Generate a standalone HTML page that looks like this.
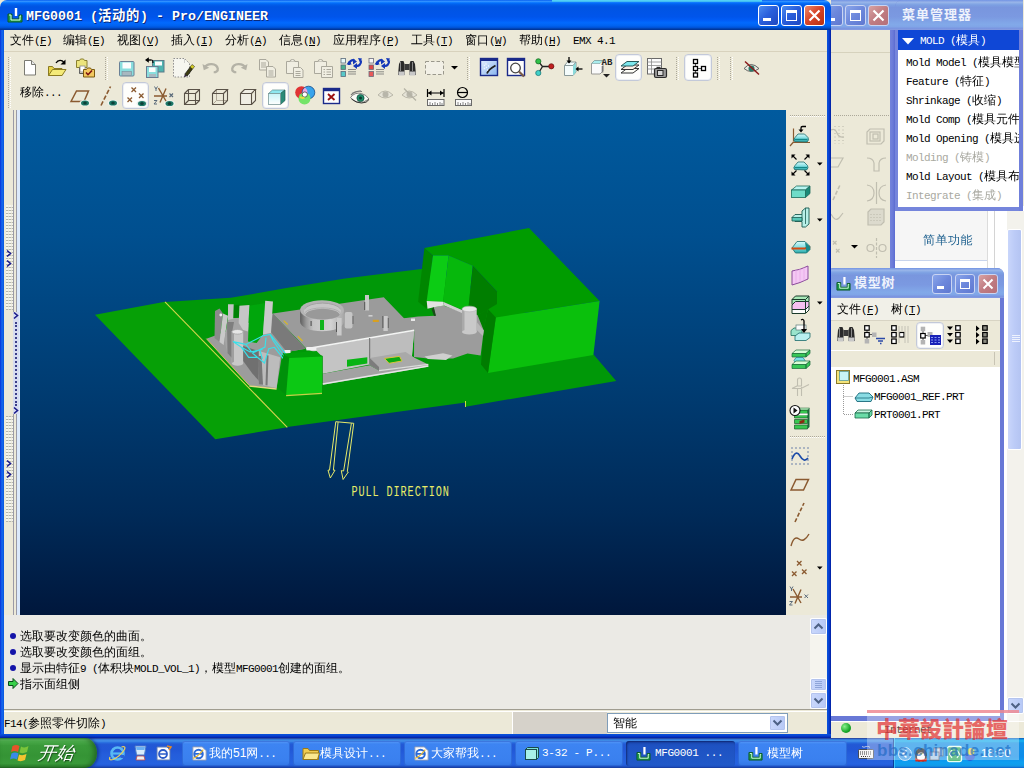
<!DOCTYPE html>
<html lang="zh-CN"><head><meta charset="utf-8"><title>MFG0001 - Pro/ENGINEER</title>
<style>
*{box-sizing:border-box;margin:0;padding:0}
html,body{width:1024px;height:768px;overflow:hidden}
body{position:relative;background:#ece9d8;color:#000;font-family:"Liberation Sans","WenQuanYi Zen Hei","Noto Sans CJK SC",sans-serif;font-size:12px;line-height:14px}
.a{position:absolute}
.mono{font-family:"Liberation Mono","WenQuanYi Zen Hei Mono","Noto Sans Mono CJK SC",monospace}
.ttl{font-family:"Liberation Sans","Noto Sans CJK SC",sans-serif;color:#fff;font-weight:bold;font-size:13px;white-space:nowrap;text-shadow:1px 1px 0 #0a2a7a}
.tb-act{background:linear-gradient(#0058ee 0%,#3593ff 4%,#288eff 6%,#127dff 8%,#036ffc 10%,#0262ee 14%,#0057e5 20%,#0054e3 24%,#0055eb 56%,#005bf5 66%,#026afe 76%,#0062ef 86%,#0052d6 92%,#0040ab 96%,#003092 100%)}
.tb-in{background:linear-gradient(#7697e7 0%,#7e9ee3 3%,#94afe8 6%,#97b4e9 8%,#82a5e4 14%,#7c9fe2 17%,#7996de 25%,#7b99e1 56%,#82a9e9 81%,#80a5e7 89%,#7b96e1 94%,#7a93df 97%,#8ea1e0 100%)}
.wb{width:21px;height:21px;border:1px solid #fff;border-radius:3px;background:linear-gradient(135deg,#4c8cf0 0%,#2a5fdc 45%,#1f48c0 100%)}
.wb.x{background:linear-gradient(135deg,#ea8a6c 0%,#d8452a 45%,#b8300f 100%)}
.wbi{width:21px;height:21px;border:1px solid #c9d4f3;border-radius:3px;background:linear-gradient(135deg,#8aa6ea 0%,#6d88dc 50%,#5f78d0 100%)}
.wbi.x{background:linear-gradient(135deg,#d9a3a3 0%,#c07c82 50%,#b56f78 100%)}
.menu span{position:absolute;top:0;white-space:nowrap}
i.l{font-style:normal;font-family:"Liberation Mono",monospace;font-size:11px;letter-spacing:-.6px}
.msg{white-space:nowrap;font-size:12px;line-height:14px}
.tk{position:absolute;top:741px;height:25px;border-radius:3px;background:linear-gradient(#5a9bf8 0%,#3d84f2 12%,#3a80ef 80%,#3276e4 100%);box-shadow:inset 0 0 0 1px rgba(30,80,190,.45);color:#fff;font-size:12px;line-height:25px;white-space:nowrap;overflow:hidden}
.tk b{font-weight:normal;position:absolute;left:27px;top:0}
.tk.on{background:linear-gradient(#1a49b4 0%,#1e52c2 20%,#2159c9 100%);box-shadow:inset 1px 1px 2px rgba(0,0,40,.5)}
.grip{position:absolute;width:3px;border-left:1px dotted #aca899;border-right:1px dotted #fff}
.sb{position:absolute;width:17px;height:17px;border:1px solid #fff;border-radius:2px;background:linear-gradient(90deg,#cad8fc,#b6c8f6);box-shadow:0 0 0 1px #b4c4ee inset}
</style></head><body>

<!-- ============ BACKGROUND (inactive) WINDOW ============ -->
<div id="bgwin" class="a" style="left:760px;top:0;width:264px;height:740px;background:#ece9d8">
 <div class="a tb-in" style="left:0;top:0;width:150px;height:30px"></div>
 <div class="a wbi" style="left:62px;top:5px"><div class="a" style="left:4px;top:12px;width:8px;height:3px;background:#fff"></div></div>
 <div class="a wbi" style="left:85px;top:5px"><div class="a" style="left:4px;top:4px;width:11px;height:11px;border:1px solid #fff;border-top-width:3px"></div></div>
 <div class="a wbi x" style="left:108px;top:5px"><svg class="a" style="left:3px;top:3px" width="13" height="13" viewBox="0 0 13 13"><path d="M1.500 1.500l10 10M11.500 1.500l-10 10" stroke="#fff" stroke-width="2.200"/></svg></div>
 <div class="a" style="left:71px;top:52px;width:60px;height:1px;background:#d6d2bd"></div>
 <div class="a" style="left:74px;top:115px;width:55px;height:0;border-top:1px dotted #aca899"></div>
 <div class="a" style="left:130px;top:30px;width:5px;height:710px;background:linear-gradient(90deg,#7484dc,#6a7ad8 60%,#5c6cd0)"></div>
 <!-- grey sketch icons -->
 <svg class="a" style="left:71px;top:120px" width="59" height="150" viewBox="831 120 59 150" fill="none" stroke="#c0beb0" stroke-width="1.200">
  <path d="M831 130q4-2 6 3t7 4"/><g stroke-dasharray="1 2.500"><path d="M835 126v18M839 126v18M843 126v18"/></g>
  <path d="M831 167h7l5-9h-12"/>
  <path d="M833 200l7-15" stroke-dasharray="4 2" stroke-width="1.600"/>
  <path d="M831 214q4 8 8 4l4-5"/>
  <path d="M833 241l3.500 3.500M836.500 241l-3.500 3.500M836 249l3.500 3.500M839.500 249l-3.500 3.500"/>
  <path d="M867 132l3-3h14v12l-3 3h-14z"/><rect x="870" y="132" width="10" height="9"/><rect x="873" y="134" width="5" height="5"/>
  <path d="M867 158q6 0 7 5v8h5v-8q1-5 7-5"/>
  <path d="M867 185q7 1 7 8t-7 8M886 185q-7 1-7 8t7 8M876.500 182v22"/>
  <path d="M868 212l3-3h13v13l-3 3h-13z" fill="#dcdacd"/><g stroke-dasharray="1 2"><path d="M871 214v9M874 214v9M877 214v9M880 214v9"/></g>
  <circle cx="870.500" cy="248" r="3.500"/><circle cx="882.500" cy="248" r="3.500"/><path d="M876.500 238v20" stroke-dasharray="3 1.500"/>
 </svg>
 <svg class="a" style="left:91px;top:245px" width="7" height="4" viewBox="0 0 7 4"><path d="M0 0h7l-3.500 3.500z" fill="#000"/></svg>
 <!-- web page area under menu manager -->
 <div class="a" style="left:135px;top:206px;width:129px;height:534px;background:#fff"></div>
 <div class="a" style="left:135px;top:211px;width:92px;height:50px;background:#f6f6f6;border-bottom:1px solid #c8d4ec"></div>
 <div class="a" style="left:227px;top:211px;width:1px;height:60px;background:#dcdcdc"></div>
 <div class="a" style="left:234px;top:211px;width:1px;height:60px;background:#d4d4d4"></div>
 <div class="a" style="left:135px;top:233px;width:92px;text-align:center;color:#1c5f8e;font-size:12px;letter-spacing:.5px;padding-left:14px">简单功能</div>
 <!-- page scrollbar -->
 <div class="a" style="left:247px;top:211px;width:17px;height:527px;background:#f3f2ec"></div>
 <div class="a" style="left:247px;top:229px;width:15px;height:221px;background:linear-gradient(90deg,#c9d6fb,#bccbf7 50%,#b4c4f2);border:1px solid #fff;border-radius:2px"></div>
 <svg class="a" style="left:252px;top:334px" width="9" height="12" viewBox="0 0 9 12"><path d="M0 1.500h8M0 3.500h8M0 5.500h8M0 7.500h8" stroke="#eef2fe" stroke-width="1"/></svg>
 <div class="sb" style="left:247px;top:697px;width:17px;height:17px"><svg width="15" height="15" viewBox="0 0 15 15"><path d="M3.500 5.500l4 4 4-4" fill="none" stroke="#4d6185" stroke-width="2"/></svg></div>
 <!-- IE status bar -->
 <div class="a" style="left:71px;top:721px;width:193px;height:17px;background:#ece9d8;border-top:1px solid #fff"></div>
 <div class="a" style="left:81px;top:723px;width:10px;height:10px;border-radius:5px;background:radial-gradient(circle at 35% 35%,#8af08a,#18a828 60%,#0a7a18)"></div>
 <div class="a" style="left:124px;top:722px"><i class="l">Internet</i></div>
</div>

<!-- ============ MENU MANAGER ============ -->
<div id="menumgr" class="a" style="left:895px;top:0;width:128px;height:211px;background:#7585dc;border-radius:7px 0 0 0;overflow:hidden">
 <div class="a tb-in" style="left:0;top:0;width:129px;height:30px"></div>
 <div class="a ttl" style="left:7px;top:8px;font-size:13px;letter-spacing:1px;text-shadow:none;color:#eef2fc">菜单管理器</div>
 <div class="a" style="left:3px;top:30px;width:121px;height:177px;background:#fff"></div>
 <div class="a" style="left:3px;top:30px;width:121px;height:20px;background:#0f47d6"></div>
 <svg class="a" style="left:7px;top:38px" width="12" height="7" viewBox="0 0 12 7"><path d="M0 0h12l-6 6.500z" fill="#fff"/></svg>
 <div class="a mm" style="left:25px;top:33px;color:#fff"><i>MOLD (</i>模具<i>)</i></div>
 <style>.mm{white-space:nowrap;font-size:12px;line-height:14px}.mm i{font-style:normal;font-family:"Liberation Mono",monospace;font-size:11px;letter-spacing:-.6px}</style>
 <div class="a mm" style="left:11px;top:55px"><i>Mold Model (</i>模具模型<i>)</i></div>
 <div class="a mm" style="left:11px;top:74px"><i>Feature (</i>特征<i>)</i></div>
 <div class="a mm" style="left:11px;top:93px"><i>Shrinkage (</i>收缩<i>)</i></div>
 <div class="a mm" style="left:11px;top:112px"><i>Mold Comp (</i>模具元件<i>)</i></div>
 <div class="a mm" style="left:11px;top:131px"><i>Mold Opening (</i>模具进料孔<i>)</i></div>
 <div class="a mm" style="left:11px;top:150px;color:#a9a9a1"><i>Molding (</i>铸模<i>)</i></div>
 <div class="a mm" style="left:11px;top:169px"><i>Mold Layout (</i>模具布局<i>)</i></div>
 <div class="a mm" style="left:11px;top:188px;color:#a9a9a1"><i>Integrate (</i>集成<i>)</i></div>
 <div class="a" style="left:124px;top:30px;width:4px;height:182px;background:#6f7fda"></div>
</div>

<!-- ============ MODEL TREE ============ -->
<div id="mtree" class="a" style="left:827px;top:268px;width:177px;height:453px;background:#6878d6;border-radius:7px 7px 0 0;overflow:hidden">
 <div class="a tb-in" style="left:0;top:0;width:177px;height:30px"></div>
 <svg class="a" style="left:9px;top:8px" width="15" height="15" viewBox="0 0 16 16"><path d="M1 7h4v5h7V8h3v7H1z" fill="#1e9a4a" stroke="#0b5a26" stroke-width="1"/><path d="M9 1v8" stroke="#fff" stroke-width="2.400"/><path d="M2 8h2v5h9V9h1" fill="none" stroke="#d8ffe0" stroke-width="1"/></svg>
 <div class="a ttl" style="left:27px;top:8px;font-size:13px;letter-spacing:.8px;text-shadow:none;color:#eef2fc">模型树</div>
 <div class="a wbi" style="left:105px;top:6px;width:20px;height:20px"><div class="a" style="left:4px;top:11px;width:7px;height:3px;background:#fff"></div></div>
 <div class="a wbi" style="left:128px;top:6px;width:20px;height:20px"><div class="a" style="left:4px;top:4px;width:10px;height:10px;border:1px solid #fff;border-top-width:3px"></div></div>
 <div class="a wbi x" style="left:151px;top:6px;width:20px;height:20px"><svg class="a" style="left:3px;top:3px" width="12" height="12" viewBox="0 0 12 12"><path d="M1.500 1.500l9 9M10.500 1.500l-9 9" stroke="#fff" stroke-width="2"/></svg></div>
 <div class="a" style="left:4px;top:30px;width:169px;height:418px;background:#ece9d8"></div>
 <div class="a" style="left:4px;top:30px;width:169px;height:23px;background:#f1f0e8;border-bottom:1px solid #d8d4c4"></div>
 <div class="a" style="left:10px;top:34px;white-space:nowrap">文件<i class="l">(<u>F</u>)</i></div>
 <div class="a" style="left:64px;top:34px;white-space:nowrap">树<i class="l">(<u>T</u>)</i></div>
 <!-- toolbar -->
 <svg class="a" style="left:9px;top:58px" width="20" height="17" viewBox="0 0 20 17"><path d="M2 4l1.500-3h3l1 3v11h-6.500zM18 4l-1.500-3h-3l-1 3v11h6.500z" fill="#2a2a2a"/><rect x="7.500" y="4" width="5" height="6" fill="#3a3a3a"/><rect x="1.500" y="11.500" width="6" height="4" fill="#c8c8c8"/><rect x="12.500" y="11.500" width="6" height="4" fill="#c8c8c8"/><path d="M3.500 2v9M15.500 2v9" stroke="#8a8a8a"/></svg>
 <svg class="a" style="left:36px;top:56px" width="24" height="22" viewBox="0 0 24 22"><path d="M4 4v12M4 10.500h6" stroke="#555"/><g fill="#fff" stroke="#000" stroke-width="1.200"><rect x="1.700" y="1.700" width="4.500" height="4.500"/></g><rect x="1.700" y="8.500" width="4.500" height="4.500" fill="#fff" stroke="#000" stroke-width="1.200"/><rect x="9" y="8.500" width="4.500" height="4.500" fill="#b4b4b4"/><rect x="1.700" y="15" width="4.500" height="4.500" fill="#b4b4b4"/><path d="M13 14.500h9M15 17h5M17 19.500h1.500" stroke="#2a4aa8" stroke-width="1.300"/></svg>
 <svg class="a" style="left:63px;top:56px" width="20" height="22" viewBox="0 0 20 22"><g fill="#fff" stroke="#000" stroke-width="1.200"><rect x="1.700" y="1.700" width="4.500" height="4.500"/><rect x="1.700" y="8.500" width="4.500" height="4.500"/><rect x="1.700" y="15" width="4.500" height="4.500"/><rect x="9.500" y="8.500" width="4.500" height="4.500"/></g><path d="M9 2v17M12 2v5M15 2v17M18 2v17" stroke="#c4c2b6"/></svg>
 <div class="pb" style="left:89px;top:54px;width:28px"></div>
 <svg class="a" style="left:92px;top:57px" width="24" height="22" viewBox="0 0 24 22"><path d="M4 4v12M4 10.500h6" stroke="#555"/><rect x="1.700" y="1.700" width="4.500" height="4.500" fill="#b4b4b4"/><rect x="1.700" y="8.500" width="4.500" height="4.500" fill="#fff" stroke="#000" stroke-width="1.200"/><rect x="1.700" y="15" width="4.500" height="4.500" fill="#b4b4b4"/><rect x="8.500" y="7" width="5" height="5" fill="#b4b4b4"/><rect x="11" y="10" width="11" height="10" fill="#1a22b8"/><path d="M12 12.500h9M12 15h9M12 17.500h9" stroke="#8a9af0" stroke-dasharray="2 1.500"/></svg>
 <svg class="a" style="left:119px;top:56px" width="18" height="22" viewBox="0 0 18 22"><g fill="#000"><path d="M1 2.500h6l-3 3.500zM1 9h6l-3 3.500zM1 15.500h6l-3 3.500z"/></g><g fill="#fff" stroke="#000" stroke-width="1.200"><rect x="9.700" y="1.700" width="4.500" height="4.500"/><rect x="9.700" y="8.500" width="4.500" height="4.500"/><rect x="9.700" y="15" width="4.500" height="4.500"/></g></svg>
 <svg class="a" style="left:147px;top:56px" width="18" height="22" viewBox="0 0 18 22"><g fill="#000"><path d="M2 1.500v6l3.500-3zM2 8v6l3.500-3zM2 14.500v6l3.500-3z"/></g><g fill="#8a8a80" stroke="#000" stroke-width="1.200"><rect x="8.700" y="1.700" width="4.500" height="4.500"/><rect x="8.700" y="8.500" width="4.500" height="4.500"/><rect x="8.700" y="15" width="4.500" height="4.500"/></g></svg>
 <!-- column header -->
 <div class="a" style="left:4px;top:82px;width:169px;height:17px;background:#ece9d8;border-top:1px solid #fff"></div>
 <div class="a" style="left:167px;top:84px;width:1px;height:13px;background:#c8c4b4"></div>
 <!-- tree -->
 <div class="a" style="left:4px;top:99px;width:169px;height:349px;background:#fff"></div>
 <svg class="a" style="left:8px;top:101px" width="40" height="56" viewBox="0 0 40 56"><path d="M8.500 16v29.500h10M8.500 27.500h10" stroke="#9a9a9a" stroke-dasharray="1 1" fill="none"/><rect x="1.500" y="1.500" width="13" height="13" fill="#f4e47a" stroke="#8a7a2a"/><rect x="4.500" y="2.500" width="9" height="9" fill="#c8f4f4" stroke="#5a9a9a" stroke-width=".8"/><path d="M20 29l4-5h10l4 4-2 4.500h-14z" fill="#8adce4" stroke="#1a6a7a" stroke-width=".9"/><path d="M20 29h14l4-1" fill="none" stroke="#1a6a7a" stroke-width=".8"/><path d="M20 44l3-3h14l-3 3z" fill="#c8f4e0" stroke="#1a6a4a" stroke-width=".8"/><path d="M20 44h14v5h-14zM34 44l3-3v5l-3 3z" fill="#6adca8" stroke="#1a6a4a" stroke-width=".8"/></svg>
 <div class="a mm" style="left:26px;top:103px"><i>MFG0001.ASM</i></div>
 <div class="a mm" style="left:47px;top:121px"><i>MFG0001_REF.PRT</i></div>
 <div class="a mm" style="left:47px;top:139px"><i>PRT0001.PRT</i></div>
</div>

<!-- ============ MAIN WINDOW ============ -->
<div id="main" class="a" style="left:0;top:0;width:831px;height:738px;background:#ece9d8">
 <!-- title bar -->
 <div class="a tb-act" style="left:0;top:0;width:831px;height:30px;border-radius:7px 7px 0 0"></div>
 <div class="a" style="left:0;top:30px;width:4px;height:708px;background:linear-gradient(90deg,#0831d9,#166aee 50%,#0855dd)"></div>
 <div class="a" style="left:827px;top:30px;width:4px;height:708px;background:linear-gradient(90deg,#0855dd,#0a3fd0 50%,#001ea0)"></div>
 <div class="a" style="left:0;top:734px;width:831px;height:4px;background:linear-gradient(#0855dd,#0a3fd0 50%,#001ea0)"></div>
 <svg class="a" style="left:7px;top:7px" width="16" height="16" viewBox="0 0 16 16"><path d="M1 7h4v5h7V8h3v7H1z" fill="#1e9a4a" stroke="#0b5a26" stroke-width="1"/><path d="M9 1v8" stroke="#fff" stroke-width="2.4"/><path d="M2 8h2v5h9V9h1" fill="none" stroke="#d8ffe0" stroke-width="1"/></svg>
 <div id="t-main" class="a ttl" style="left:26px;top:9px;font-family:'Liberation Mono','Noto Sans CJK SC',monospace;font-size:13.33px;line-height:15px">MFG0001 (<span style="letter-spacing:.67px">活动的</span>) - Pro/ENGINEER</div>
 <div class="a wb" style="left:758px;top:5px"><div class="a" style="left:4px;top:12px;width:8px;height:3px;background:#fff"></div></div>
 <div class="a wb" style="left:781px;top:5px"><div class="a" style="left:4px;top:4px;width:11px;height:11px;border:1px solid #fff;border-top-width:3px"></div></div>
 <div class="a wb x" style="left:804px;top:5px"><svg class="a" style="left:3px;top:3px" width="13" height="13" viewBox="0 0 13 13"><path d="M1.5 1.5l10 10M11.5 1.5l-10 10" stroke="#fff" stroke-width="2.2"/></svg></div>
 <div class="a" style="left:552px;top:0;width:210px;height:2px;background:linear-gradient(#5ad8f8,#38b4f0)"></div>
 <!-- menu bar -->
 <div class="a menu" style="left:4px;top:30px;width:823px;height:22px;background:#ece9d8;border-bottom:1px solid #d8d2bd">
  <span style="left:6px;top:3px">文件<i class="l">(<u>F</u>)</i></span><span style="left:59px;top:3px">编辑<i class="l">(<u>E</u>)</i></span><span style="left:113px;top:3px">视图<i class="l">(<u>V</u>)</i></span><span style="left:167px;top:3px">插入<i class="l">(<u>I</u>)</i></span><span style="left:221px;top:3px">分析<i class="l">(<u>A</u>)</i></span><span style="left:275px;top:3px">信息<i class="l">(<u>N</u>)</i></span><span style="left:329px;top:3px">应用程序<i class="l">(<u>P</u>)</i></span><span style="left:407px;top:3px">工具<i class="l">(<u>T</u>)</i></span><span style="left:461px;top:3px">窗口<i class="l">(<u>W</u>)</i></span><span style="left:515px;top:3px">帮助<i class="l">(<u>H</u>)</i></span><span style="left:569px;top:3px"><i class="l">EMX 4.1</i></span>
 </div>
 <!-- toolbars -->
<div id="tb" class="a" style="left:0;top:0;width:831px;height:110px">
<style>
.pb{position:absolute;width:27px;height:27px;background:#fefefc;border:1px solid #c3c9d9;border-radius:4px;box-shadow:inset 0 0 0 1px #eef0f4}
.ic{position:absolute;overflow:visible}
</style>
<div class="grip" style="left:8px;top:57px;height:51px"></div>
<div class="grip" style="left:105px;top:57px;height:23px"></div>
<div class="grip" style="left:467px;top:57px;height:23px"></div>
<div class="grip" style="left:676px;top:57px;height:23px"></div>
<div class="grip" style="left:717px;top:57px;height:23px"></div>
<div class="grip" style="left:730px;top:57px;height:23px"></div>
<!-- row1 -->
<svg class="ic" style="left:23px;top:58px" width="16" height="20" viewBox="0 0 16 20"><path d="M1.5 2.5h7l4 4v10.5h-11z" fill="#fff" stroke="#7a7a72"/><path d="M8.5 2.5v4h4" fill="#e8e8e8" stroke="#7a7a72"/></svg>
<svg class="ic" style="left:47px;top:57px" width="22" height="22" viewBox="0 0 22 22"><path d="M1.5 18.5v-9h4l1.5 2h8v7z" fill="#e8d44a" stroke="#8a7a20"/><path d="M1.5 18.5l4-6h13.5l-4 6z" fill="#f4ea78" stroke="#8a7a20"/><path d="M9 6c2-3.5 6-3.5 8-0.5" fill="none" stroke="#000" stroke-width="1.3"/><path d="M18.5 2.5v5h-5z" fill="#000"/></svg>
<svg class="ic" style="left:75px;top:57px" width="22" height="22" viewBox="0 0 22 22"><path d="M1.5 3.5h3l1-1.5h3l1 1.5h2.5v7h-10.5z" fill="#ece47c" stroke="#8a8030"/><path d="M4.500 10.500v6h4" fill="none" stroke="#555"/><rect x="5" y="9" width="5" height="6" fill="#fff" stroke="#888" stroke-width=".8"/><path d="M8.5 12.500h3l1-1.500h3l1 1.500h3v7.500h-11z" fill="#f2c860" stroke="#7a5a10"/><path d="M11 15.500l2 2.200 4-4.200" fill="none" stroke="#7a1010" stroke-width="1.6"/></svg>
<svg class="ic" style="left:118px;top:60px" width="18" height="18" viewBox="0 0 18 18"><rect x="1.500" y="1.500" width="14.500" height="14.500" rx="1" fill="#8adede" stroke="#6a8096"/><rect x="4.500" y="2.500" width="8.500" height="6" fill="#fdfdfd"/><rect x="4" y="11.500" width="9.500" height="4" fill="#a8b8c0" stroke="#7a8a98" stroke-width=".6"/></svg>
<svg class="ic" style="left:144px;top:57px" width="22" height="22" viewBox="0 0 22 22"><rect x="8.500" y="3.500" width="11.500" height="11.500" fill="#4eb4b0" stroke="#5a7a88"/><rect x="11" y="4.500" width="7" height="4" fill="#fdfdfd"/><rect x="2.500" y="9.500" width="11.500" height="11" fill="#8adede" stroke="#6a7a90"/><rect x="5" y="10.500" width="6.500" height="4.500" fill="#fdfdfd"/><rect x="5" y="17" width="7" height="3" fill="#a8b8c0"/><path d="M7.500 3h-4.500" stroke="#000" stroke-width="1.400"/><path d="M1 3l3.800-2.800v5.600z" fill="#000"/><path d="M7.500 3q1.500 0 1.500 3" fill="none" stroke="#000" stroke-width="1.200"/></svg>
<svg class="ic" style="left:172px;top:57px" width="24" height="22" viewBox="0 0 24 22"><path d="M1.500 1.500h11l5 5v13.500h-16z" fill="#f6f6f0" stroke="#8e8e8e" stroke-dasharray="1.500 1.500"/><path d="M12.500 5.500v-4" stroke="#aaa" stroke-dasharray="1 1"/><path d="M12.800 17.200l7.200-9.500 2.400 1.800-7.200 9.500z" fill="#3c3c10" stroke="#111" stroke-width=".7"/><path d="M18.300 9.900l1.700-2.200 2.400 1.800-1.700 2.200z" fill="#d4cc28"/><path d="M12.800 17.200l-.8 3 3.200-1.200z" fill="#30203a"/></svg>
<svg class="ic" style="left:202px;top:62px" width="18" height="11.500" viewBox="0 0 20 14" preserveAspectRatio="none"><path d="M3 6.500c3-5.500 13-5.500 14.500 1.500c.5 3-2 4.500-4.500 4.500" fill="none" stroke="#b4b2a6" stroke-width="2.600"/><path d="M.5 2.500l1.500 7.500 6-3z" fill="#b4b2a6"/></svg>
<svg class="ic" style="left:230px;top:62px" width="18" height="11.500" viewBox="0 0 20 14" preserveAspectRatio="none"><path d="M17 6.500c-3-5.500-13-5.500-14.500 1.500c-.5 3 2 4.500 4.500 4.500" fill="none" stroke="#b4b2a6" stroke-width="2.600"/><path d="M19.500 2.500l-1.500 7.500-6-3z" fill="#b4b2a6"/></svg>
<svg class="ic" style="left:258px;top:58px" width="20" height="20" viewBox="0 0 20 20"><g fill="#f0eee2" stroke="#aaa89c"><path d="M1.500 1.500h6.500l2.500 2.500v8h-9z"/><path d="M8.500 8.500h6.500l2.500 2.500v8h-9z"/></g><path d="M3 5h5M3 7h5M3 9h5M10.500 13h5M10.500 15h5M10.500 17h5" stroke="#aaa89c"/></svg>
<svg class="ic" style="left:285px;top:58px" width="20" height="21" viewBox="0 0 20 21"><g fill="#f0eee2" stroke="#aaa89c"><path d="M1.500 3.500h12v12h-12z"/><path d="M5 3.500q0-2 2.500-2t2.500 2"/><path d="M8.500 9.500h7l2.500 2.500v7.500h-9.500z"/></g><path d="M10.500 13.500h5M10.500 15.500h5M10.500 17.500h5" stroke="#aaa89c"/></svg>
<svg class="ic" style="left:313px;top:58px" width="22" height="21" viewBox="0 0 22 21"><g fill="#f0eee2" stroke="#aaa89c"><path d="M1.500 3.500h12v12h-12z"/><path d="M5 3.500q0-2 2.500-2t2.500 2"/><path d="M8.500 8.500h11v11h-11z"/></g><path d="M10.500 11.500h1.500M13.500 11.500h4.500M10.500 14h1.500M13.500 14h4.500M10.500 16.500h1.500M13.500 16.500h4.500" stroke="#aaa89c"/></svg>
<svg class="ic" style="left:340px;top:57px" width="23" height="22" viewBox="0 0 23 22"><g stroke="#5a6a7a" stroke-width=".8"><rect x="1" y="1.500" width="4.500" height="4.500" fill="#e8f8f8"/><rect x="1" y="8" width="4.500" height="4.500" fill="#48b090"/><rect x="1" y="14.500" width="4.500" height="5" fill="#58c8c8"/></g><path d="M8 12.500h8M8 14.800h8M8 17h8" stroke="#8a8a86"/><path d="M9 8c0-4 3-5.500 5.500-4.500M21 3.500c.5 4-2.500 6-5 5" fill="none" stroke="#1438b8" stroke-width="2.200"/><path d="M6.500 7.500l2.700-4 2.500 4zM18 1l4 .5-2 4z" fill="#1438b8"/><path d="M13 1.500l4 3-4 3z" fill="#1438b8"/><path d="M17 10.500l-4-3 4-3z" fill="#1438b8" transform="translate(0,1.500)"/></svg>
<svg class="ic" style="left:368px;top:57px" width="23" height="22" viewBox="0 0 23 22"><g stroke="#6a6a7a" stroke-width=".8"><rect x="1" y="1.500" width="4.500" height="4.500" fill="#f8f8f8"/><rect x="1" y="8" width="4.500" height="4.500" fill="#e04848"/><rect x="1" y="14.500" width="4.500" height="5" fill="#e85a5a"/></g><path d="M8 12.500h8M8 14.800h8M8 17h8" stroke="#8a8a86"/><path d="M9 8c0-4 3-5.500 5.500-4.500M21 3.500c.5 4-2.500 6-5 5" fill="none" stroke="#1438b8" stroke-width="2.200"/><path d="M6.500 7.500l2.700-4 2.500 4zM18 1l4 .5-2 4z" fill="#1438b8"/><path d="M13 1.500l4 3-4 3z" fill="#1438b8"/><path d="M17 10.500l-4-3 4-3z" fill="#1438b8" transform="translate(0,1.500)"/></svg>
<svg class="ic" style="left:397px;top:60px" width="20" height="17" viewBox="0 0 20 17"><path d="M2 4l1.500-3h3l1 3v11h-6.500zM18 4l-1.500-3h-3l-1 3v11h6.500z" fill="#2a2a2a"/><rect x="7.500" y="4" width="5" height="6" fill="#3a3a3a"/><rect x="1.500" y="11.500" width="6" height="4" fill="#c8c8c8"/><rect x="12.500" y="11.500" width="6" height="4" fill="#c8c8c8"/><path d="M3.500 2v9M15.500 2v9" stroke="#8a8a8a"/></svg>
<svg class="ic" style="left:424px;top:60px" width="22" height="16" viewBox="0 0 22 16"><rect x="1.500" y="1.500" width="18" height="13" fill="#f2f0e6" stroke="#9a988c" stroke-dasharray="3.500 2"/></svg>
<svg class="ic" style="left:451px;top:66px" width="7" height="4" viewBox="0 0 7 4"><path d="M0 0h7l-3.500 3.500z" fill="#000"/></svg>
<svg class="ic" style="left:479px;top:57px" width="20" height="20" viewBox="0 0 20 20"><defs><linearGradient id="gRp" x1="0" y1="0" x2="1" y2="1"><stop offset="0" stop-color="#e8f2ff"/><stop offset="1" stop-color="#88b4ee"/></linearGradient></defs><rect x="1.500" y="1.500" width="17" height="17" fill="url(#gRp)" stroke="#1a2a8a" stroke-width="1.400"/><rect x="1" y="1" width="18" height="3" fill="#1a2a8a"/><path d="M8 16.500c1-3 4-5.500 8.500-8" fill="none" stroke="#222" stroke-width="1.800"/><path d="M5 8l1 1M7 10l1 1M6.500 6.500l1 1M9 8.500l1 1M5 11l1 1M8 12.500l1 1" stroke="#f4f8ff" stroke-width="1.200"/></svg>
<svg class="ic" style="left:506px;top:57px" width="21" height="21" viewBox="0 0 21 21"><rect x="1.500" y="1.500" width="17" height="17" fill="#fdfdfd" stroke="#1a2a8a" stroke-width="1.400"/><rect x="1" y="1" width="18" height="3" fill="#1a2a8a"/><circle cx="9.500" cy="11" r="4.800" fill="#fff" stroke="#444" stroke-width="1.300"/><path d="M13 14.500l5 5" stroke="#7a5a4a" stroke-width="2.200"/></svg>
<svg class="ic" style="left:534px;top:57px" width="22" height="21" viewBox="0 0 22 21"><path d="M4.500 4.500l4 5-4 6.500M8.500 9.500h9" fill="none" stroke="#222" stroke-width="1.300"/><circle cx="4.300" cy="4.300" r="2.600" fill="#30c048" stroke="#106020" stroke-width=".7"/><circle cx="4.300" cy="16" r="2.600" fill="#40d0c8" stroke="#107070" stroke-width=".7"/><circle cx="17.300" cy="9.300" r="2.600" fill="#c02020" stroke="#601010" stroke-width=".7"/></svg>
<svg class="ic" style="left:563px;top:57px" width="21" height="21" viewBox="0 0 21 21"><path d="M1.500 8.500l3-3.500h8.500v10l-3 3.500h-8.500z" fill="#f4fcfc" stroke="#8a9a9a"/><path d="M10 8.500l3-3.500v10l-3 3.500z" fill="#8adada"/><path d="M1.500 8.500h8.500l3-3.500" fill="none" stroke="#8a9a9a"/><path d="M6 0v5.500" stroke="#000" stroke-width="1.300"/><path d="M3.500 3.500h5l-2.500 3z" fill="#000"/><path d="M19.500 12h-5" stroke="#000" stroke-width="1.300"/><path d="M15.500 9.500v5l-3-2.500z" fill="#000"/></svg>
<svg class="ic" style="left:590px;top:56px" width="24" height="23" viewBox="0 0 24 23"><path d="M1.500 7.500l3-3h8.500v10.500l-3 3h-8.500z" fill="#fafafa" stroke="#9a9a96"/><path d="M1.500 7.500l3-3h8.500l-3 3z" fill="#a8ecec" stroke="#7a9a9a" stroke-width=".6"/><text x="11.500" y="8.500" font-family="'Liberation Mono',monospace" font-size="9" font-weight="bold" fill="#222" textLength="11">AB</text><path d="M12.500 10v6.500" stroke="#777" stroke-width="1.600"/><path d="M13 18h7l-3.500 3.500z" fill="#222"/></svg>
<div class="pb" style="left:615px;top:54px"></div>
<svg class="ic" style="left:620px;top:60px" width="20" height="18" viewBox="0 0 20 18"><path d="M1 13l6-4.500h12l-6 4.500z" fill="#fdfdf6" stroke="#333"/><path d="M1 9.500l6-4.500h12l-6 4.500z" fill="#fdeee6" stroke="#333"/><path d="M1 6l6-4.500h12l-6 4.500z" fill="#7ee8ee" stroke="#2a5a5a"/></svg>
<svg class="ic" style="left:646px;top:57px" width="22" height="22" viewBox="0 0 22 22"><rect x="1.500" y="1.500" width="14" height="15.500" fill="#fdfdfd" stroke="#6a6a6a"/><path d="M1.500 5h14M1.500 8.500h14M1.500 12h14M5.500 1.500v15.500" stroke="#8a8a8a" stroke-width=".8"/><rect x="8.500" y="11.500" width="12" height="9" rx="1.500" fill="#9a9a9a" stroke="#2a2a2a" stroke-width="1.200"/><rect x="11.500" y="13.500" width="5.500" height="5" fill="#d8d8d8" stroke="#2a2a2a"/><rect x="10.500" y="9.800" width="4" height="2" fill="#2a2a2a"/></svg>
<div class="pb" style="left:684px;top:54px;width:28px"></div>
<svg class="ic" style="left:692px;top:58px" width="16" height="20" viewBox="0 0 16 20"><path d="M3.500 3v14M3.500 10.500h8" stroke="#555" stroke-width="1"/><g fill="#fff" stroke="#000" stroke-width="1.300"><rect x="1.500" y="1.500" width="4" height="4"/><rect x="1.500" y="8.500" width="4" height="4"/><rect x="1.500" y="15" width="4" height="4"/><rect x="9.500" y="8.500" width="4" height="4"/></g></svg>
<svg class="ic" style="left:743px;top:60px" width="18" height="16" viewBox="0 0 18 16"><path d="M1 8.500q7-8 15 0q-8 6-15 0z" fill="#e8e8e0" stroke="#555" stroke-width=".9"/><circle cx="8.500" cy="8.500" r="3" fill="#2a7a6a"/><path d="M2 1.500l14 13" stroke="#8a1a1a" stroke-width="1.500"/></svg>
<!-- row2 -->
<div class="a" style="left:20px;top:85px;white-space:nowrap;">移除<i class="l">...</i></div>
<svg class="ic" style="left:69px;top:88px" width="23" height="20" viewBox="0 0 23 20"><path d="M2 13.500l5.500-10.500h12l-4.500 10.500z" fill="none" stroke="#8a5a30" stroke-width="1.500"/><ellipse cx="16" cy="15" rx="5.500" ry="3.200" fill="#eef4f0"/><ellipse cx="16" cy="15" rx="4" ry="2.600" fill="#1e7868"/><ellipse cx="16" cy="15" rx="1.800" ry="1.600" fill="#0c4038"/></svg>
<svg class="ic" style="left:99px;top:85px" width="22" height="23" viewBox="0 0 22 23"><path d="M2 20.500l9.500-19" stroke="#8a5a30" stroke-width="1.600" stroke-dasharray="4.500 2"/><ellipse cx="14" cy="18" rx="5.500" ry="3.200" fill="#eef4f0"/><ellipse cx="14" cy="18" rx="4" ry="2.600" fill="#1e7868"/><ellipse cx="14" cy="18" rx="1.800" ry="1.600" fill="#0c4038"/></svg>
<div class="pb" style="left:122px;top:82px"></div>
<svg class="ic" style="left:126px;top:86px" width="23" height="22" viewBox="0 0 23 22"><path d="M5.500 1.500l4.500 4.500M10 1.500l-4.500 4.500M13 7.500l4.500 4.500M17.500 7.500l-4.500 4.500M1.500 11.500l4.500 4.500M6 11.500l-4.500 4.500" stroke="#8a5a30" stroke-width="1.300"/><ellipse cx="16" cy="17.500" rx="5.500" ry="3.200" fill="#e4ecea"/><ellipse cx="16" cy="17.500" rx="4" ry="2.600" fill="#1e7868"/><ellipse cx="16" cy="17.500" rx="1.800" ry="1.600" fill="#0c4038"/></svg>
<svg class="ic" style="left:153px;top:85px" width="23" height="23" viewBox="0 0 23 23"><path d="M1 11h13M5.500 3l8 14M13 3.500l-6 14" stroke="#8a5a30" stroke-width="1.400"/><path d="M1.500 1.500l1.500 2.500 1.500-2.500M3 4v2" stroke="#5a6a7a" fill="none"/><path d="M16.500 8.500l3.500 3.500M20 8.500l-3.500 3.500" stroke="#5a6a7a" stroke-width="1.200"/><path d="M1 15.500h3l-3 3.500h3" stroke="#5a6a7a" fill="none"/><ellipse cx="16.500" cy="18.500" rx="5.500" ry="3.200" fill="#eef4f0"/><ellipse cx="16.500" cy="18.500" rx="4" ry="2.600" fill="#1e7868"/><ellipse cx="16.500" cy="18.500" rx="1.800" ry="1.600" fill="#0c4038"/></svg>
<svg class="ic" style="left:183px;top:88px" width="19" height="18" viewBox="0 0 19 18"><path d="M1.500 5.500h11v11h-11zM5.500 1.500h11v11h-11zM1.500 5.500l4-4M12.500 5.500l4-4M1.500 16.500l4-4M12.500 16.500l4-4" fill="none" stroke="#5a5248" stroke-width="1.100"/></svg>
<svg class="ic" style="left:211px;top:88px" width="19" height="18" viewBox="0 0 19 18"><path d="M5.500 12.500v-11M5.500 12.500h11M1.500 16.500l4-4" fill="none" stroke="#b0a898" stroke-width="1"/><path d="M1.500 5.500h11v11h-11zM1.500 5.500l4-4h11l-4 4M16.500 1.500v11l-4 4" fill="none" stroke="#5a5248" stroke-width="1.100"/></svg>
<svg class="ic" style="left:239px;top:88px" width="19" height="18" viewBox="0 0 19 18"><path d="M1.500 5.500h11v11h-11zM1.500 5.500l4-4h11l-4 4M16.500 1.500v11l-4 4" fill="#f0eee4" stroke="#5a5248" stroke-width="1.100"/></svg>
<div class="pb" style="left:262px;top:82px"></div>
<svg class="ic" style="left:267px;top:88px" width="20" height="18" viewBox="0 0 20 18"><defs><linearGradient id="gSh" x1="0" y1="0" x2="0" y2="1"><stop offset="0" stop-color="#c8f4f8"/><stop offset="1" stop-color="#ffffff"/></linearGradient></defs><path d="M1.500 5.500l4-3.500h12.500l-4.500 3.500z" fill="#8ee8f0" stroke="#5a8a8a" stroke-width=".7"/><path d="M13.500 5.500l4.500-3.500v10.500l-4.500 4z" fill="#2a8a78" stroke="#1a5a50" stroke-width=".7"/><rect x="1.500" y="5.500" width="12" height="11" fill="url(#gSh)" stroke="#7a9a9a" stroke-width=".8"/></svg>
<svg class="ic" style="left:294px;top:85px" width="22" height="21" viewBox="0 0 22 21"><circle cx="7.500" cy="7.500" r="6.300" fill="#e03434"/><circle cx="14.500" cy="7.500" r="6.300" fill="#38a4ec" stroke="#124a8a" stroke-width=".8"/><circle cx="10.500" cy="13.500" r="6" fill="#74e468"/><path d="M11 2.500a6.300 6.300 0 0 1 0 10a6.300 6.300 0 0 1 0-10z" fill="#f0a8e0"/><circle cx="10.800" cy="9.500" r="2.600" fill="#fff" stroke="#333" stroke-width=".7"/><path d="M6 12q2 1.500 4.500.5" stroke="#e8e040" stroke-width="2" fill="none"/></svg>
<svg class="ic" style="left:322px;top:87px" width="19" height="18" viewBox="0 0 19 18"><rect x="1.500" y="1.500" width="16" height="15" fill="#fdfdfd" stroke="#1a2a8a" stroke-width="1.400"/><rect x="1" y="1" width="17" height="3.200" fill="#1a2a8a"/><path d="M6 7l6.500 6M12.500 7l-6.500 6" stroke="#9a1010" stroke-width="1.800"/></svg>
<svg class="ic" style="left:349px;top:89px" width="22" height="16" viewBox="0 0 22 16"><path d="M1.500 8.500q4-5.500 11-4q4.500 1 7.500 5.500q-5.500 4.500-11.500 3q-4-1-7-4.500z" fill="#fafaf6" stroke="#6a6a6a" stroke-width=".8"/><path d="M2 6q5-4.500 11-3.500M3 4.500q4-3 9-2.500" stroke="#777" stroke-width="1.100" fill="none"/><circle cx="11.500" cy="9" r="3.600" fill="#1e8a6a" stroke="#0c4a38" stroke-width=".7"/><circle cx="11.500" cy="9" r="1.500" fill="#0c3a30"/><path d="M2.500 10q4.500 4 10 4t7.500-3.500" stroke="#333" stroke-width="1" fill="none"/></svg>
<svg class="ic" style="left:377px;top:89px" width="18" height="12" viewBox="0 0 18 12"><path d="M1 6q7-8 15 0q-8 6-15 0z" fill="#e6e4d8" stroke="#b4b2a4" stroke-width=".9"/><circle cx="8.500" cy="5.500" r="3" fill="#b8b6aa"/></svg>
<svg class="ic" style="left:401px;top:88px" width="18" height="14" viewBox="0 0 18 14"><path d="M1 7q7-8 15 0q-8 6-15 0z" fill="#e6e4d8" stroke="#b4b2a4" stroke-width=".9"/><circle cx="8.500" cy="6.500" r="3" fill="#b8b6aa"/><path d="M3 .5l12 12" stroke="#b4b2a4" stroke-width="1.300"/></svg>
<svg class="ic" style="left:426px;top:88px" width="20" height="19" viewBox="0 0 20 19"><path d="M1.500 1v8M18 1v8M2 5h15.500" stroke="#000" stroke-width="1.200"/><path d="M2 5l3.500-2.500v5zM17.500 5l-3.500-2.500v5z" fill="#000"/><rect x="1.500" y="11.500" width="16.500" height="6" fill="#fafafa" stroke="#6a6a6a"/><path d="M4 14v3.500M6.500 15v2.500M9 14v3.500M11.500 15v2.500M14 14v3.500M16 15v2.500" stroke="#6a6a6a" stroke-width=".8"/></svg>
<svg class="ic" style="left:454px;top:86px" width="20" height="21" viewBox="0 0 20 21"><circle cx="8.500" cy="6.500" r="5" fill="none" stroke="#000" stroke-width="1.200"/><path d="M3.500 6.500h10" stroke="#000" stroke-width="1.200"/><rect x="1.500" y="13.500" width="16" height="6" fill="#fafafa" stroke="#6a6a6a"/><path d="M4 16v3.500M6.500 17v2.500M9 16v3.500M11.500 17v2.500M14 16v3.500M16 17v2.500" stroke="#6a6a6a" stroke-width=".8"/></svg>
</div>
 <!-- left sash -->
 <div class="a" style="left:13px;top:110px;width:1px;height:505px;background:#9a9aa6"></div>
 <div class="a" style="left:16px;top:110px;width:1px;height:505px;background:#9a9aa6"></div>
 <div class="a" style="left:17px;top:110px;width:3px;height:505px;background:#dbe9fb"></div>
 <div class="a" style="left:13px;top:312px;width:6px;height:102px;background:#d6dcf0"></div>
 <div class="a" style="left:15px;top:322px;width:0;height:84px;border-left:2px dotted #3a3e8a"></div>
 <div class="a" style="left:6px;top:205px;width:7px;height:105px;background:repeating-linear-gradient(0deg,#aeb0a8 0 1px,#f6f6f0 1px 3px);opacity:.9"></div>
 <div class="a" style="left:8px;top:205px;width:1px;height:105px;background:#ece9d8;opacity:.7"></div><div class="a" style="left:11px;top:205px;width:1px;height:105px;background:#ece9d8;opacity:.7"></div>
 <div class="a" style="left:6px;top:416px;width:7px;height:106px;background:repeating-linear-gradient(0deg,#aeb0a8 0 1px,#f6f6f0 1px 3px);opacity:.9"></div>
 <div class="a" style="left:8px;top:416px;width:1px;height:106px;background:#ece9d8;opacity:.7"></div><div class="a" style="left:11px;top:416px;width:1px;height:106px;background:#ece9d8;opacity:.7"></div>
 <svg class="a" style="left:0;top:110px" width="20" height="505" viewBox="0 110 20 505" fill="none" stroke="#1a1a8a" stroke-width="1.600"><path d="M7 250.500l3.500 3-3.500 3M7 260.500l3.500 3-3.500 3M7 460.500l3.500 3-3.500 3M7 471.500l3.500 3-3.500 3M14 312.500l3.500 3-3.500 3M14 407.500l3.500 3-3.500 3"/></svg>
 <!-- viewport -->
 <div id="view" class="a" style="left:20px;top:110px;width:766px;height:505px;background:linear-gradient(#005a9e 0%,#004f8f 25%,#003c72 55%,#002a58 80%,#00173c 100%);overflow:hidden">
<svg class="a" style="left:0;top:0" width="766" height="505" viewBox="20 110 766 505" shape-rendering="geometricPrecision">
 <!-- base planes -->
 <polygon points="95,314.700 165,301.800 287.300,427.300 215.300,439.300" fill="#06a006"/>
 <polygon points="165,302 230.800,297.800 286.500,288.100 345.100,278.400 421.300,269 500,300 594,355 616.200,381 465.500,406.700 465.500,402.500 287.300,427" fill="#009808"/>
 <line x1="165" y1="301.800" x2="287.300" y2="427.300" stroke="#d4d84a" stroke-width="1.100"/>
 <line x1="465.5" y1="401" x2="465.5" y2="407" stroke="#c8e040" stroke-width="1"/>
 <!-- big block -->
 <polygon points="424.4,248 529,228 599.6,301 495.8,317.5 488,309 497,304 497,291.6 472.8,265.8 448.6,255.6 433,255.6" fill="#009c00"/>
 <polygon points="495.8,317.5 599.6,301 593.4,355 488,373" fill="#0ac00c"/>
 <polygon points="424.4,248 433,255.6 426.7,308.75 418.1,301.7" fill="#008600"/>
 <polygon points="433,255.6 448.6,255.6 443.1,301.7 426.7,301" fill="#0ccc14"/>
 <polygon points="448.6,255.6 472.8,265.8 468,312 443.1,301.7" fill="#06b80c"/>
 <polygon points="472.8,265.8 497,291.6 497,304 487,310 477.5,315 468,312" fill="#007e00"/>
 <polygon points="488,309 495.8,317.5 488,373 481,364.4 483.5,330" fill="#007c00"/>
 <polygon points="477.5,315 488,309 483.5,330" fill="#007e00"/>
 <!-- grey: right floor -->
 <polygon points="404,318.3 418,316.6 435.3,315.8 433.75,307.2 443.1,305.6 462,312 477.5,315 483.75,330.6 480.6,355.6 467.5,353.5 453,358.5 428.3,358.5 414,357 414.2,330" fill="#9c9c9c"/>
 <polygon points="426.7,301 443.1,301.7 444,305.6 433.75,307.2 427.5,308.75" fill="#e2e2e2"/>
 <polygon points="443.1,301.7 462,310 462,313 444,305.6" fill="#cfcfcf"/>
 <polygon points="433.75,307.2 436,315.8 434,316 431.5,309" fill="#1a4a1a"/>
 <!-- right cylinder -->
 <rect x="462" y="309" width="14.7" height="23" fill="#c9c9c9"/>
 <rect x="462" y="309" width="2.5" height="23" fill="#a9a9a9"/>
 <ellipse cx="469.35" cy="332" rx="7.35" ry="2.6" fill="#c9c9c9"/>
 <ellipse cx="469.35" cy="309" rx="7.35" ry="2.8" fill="#e6e6e6" stroke="#b4b4b4" stroke-width=".6"/>
 <polygon points="476.7,322 483.75,330.6 483,336 476.7,330" fill="#b8b8b8"/>
 <polygon points="424.4,356.4 443.1,353.3 452.5,355.6 446,360 428,359" fill="#cfcfcf"/>
 <!-- grey: middle box top -->
 <polygon points="272.8,313.6 383.75,297.2 404,318.3 415,318.3 414.2,330 306.4,348.75" fill="#9b9b9b"/>
 <!-- front face -->
 <polygon points="306.4,348.75 414.2,330.5 411.9,356.6 369.7,364.4 322.8,373.75 322.8,356" fill="#c4c4c4"/>
 <polygon points="369.7,337.5 414.2,330.5 411.9,356.6 369.7,364.4" fill="#bdbdbd"/>
 <line x1="306.4" y1="348.75" x2="414.2" y2="330.3" stroke="#f4f4f4" stroke-width="1.6"/>
 <line x1="369.7" y1="338" x2="369.7" y2="364.4" stroke="#6a6a6a" stroke-width="1"/>
 <polygon points="347,359.7 367.3,357.3 367.3,363.6 347,366.7" fill="#08b414"/>
 <!-- lower ledge -->
 <polygon points="322.8,373.75 369.7,365.2 379,370.6 428.3,364.4 428.3,366.7 322.8,384.7" fill="#a2a2a2"/>
 <line x1="322.8" y1="384" x2="428.3" y2="366" stroke="#e6e6e6" stroke-width="1.4"/>
 <!-- bracket -->
 <polygon points="369.7,358 405.6,351.9 415,358 428.3,364.4 379,370.6 369.7,365" fill="#a9a9a9"/>
 <polygon points="369.7,358 379,367 379,370.6 369.7,365" fill="#7c7c7c"/>
 <polygon points="384.5,358.4 399.5,356.4 402,361 389,363.3" fill="#0aa814" stroke="#d8c43a" stroke-width="1"/>
 <line x1="379" y1="370.6" x2="428.3" y2="364.4" stroke="#dcdcdc" stroke-width="1.2"/>
 <!-- ring -->
 <defs><linearGradient id="gRing" x1="0" y1="0" x2="1" y2="0"><stop offset="0" stop-color="#5e5e5e"/><stop offset=".14" stop-color="#9a9a9a"/><stop offset=".3" stop-color="#c4c4c4"/><stop offset=".7" stop-color="#d2d2d2"/><stop offset="1" stop-color="#a8a8a8"/></linearGradient></defs>
 <path d="M300.100,310 v11.500 a21.900,9.800 0 0 0 43.800,0 v-11.500 z" fill="url(#gRing)"/>
 <ellipse cx="322" cy="310" rx="21.900" ry="9.800" fill="#b4b4b4"/>
 <ellipse cx="322.400" cy="310.800" rx="18.600" ry="7.900" fill="#c6c6c6"/>
 <path d="M304.500,309 a18.600,7.900 0 0 1 36,0" fill="none" stroke="#a2a2a2" stroke-width="1"/>
 <path d="M305,312.500 a18,6 0 0 1 35,0" fill="none" stroke="#aaaaaa" stroke-width=".9"/>
 <path d="M305.300,314.500 a17.300,6.400 0 0 1 34.400,0 a17.300,5.600 0 0 1 -34.400,0z" fill="#999999"/>
 <rect x="320" y="320" width="4" height="10" fill="#10b41c"/>
 <rect x="310.500" y="321" width="1.200" height="5" fill="#5a5a5a"/>
 <!-- pins -->
 <rect x="365" y="295" width="4" height="15.5" fill="#c8c8c8"/><rect x="364.2" y="302" width="1" height="8" fill="#555"/>
 <rect x="344.7" y="312" width="7.8" height="16.4" rx="2" fill="#c6c6c6"/><rect x="352.5" y="316" width="1" height="8" fill="#666"/>
 <rect x="337" y="318" width="4.6" height="17.5" fill="#cacaca"/><rect x="336" y="322" width="1" height="10" fill="#555"/>
 <rect x="383.4" y="316" width="4.4" height="15" fill="#cacaca"/><rect x="382.4" y="316" width="1" height="12" fill="#555"/><rect x="387.8" y="318" width="1" height="10" fill="#666"/>
 <rect x="372.8" y="319.8" width="6" height="2.2" fill="#d8a020"/>
 <rect x="368.5" y="315" width="4" height="1.6" fill="#d0d0d0"/>
 <rect x="411" y="318.5" width="4" height="2.5" fill="#e8e8e8"/>
 <line x1="283.75" y1="320.6" x2="287.7" y2="324.5" stroke="#d8b828" stroke-width="1.2"/>
 <line x1="297.8" y1="336.25" x2="302.5" y2="341" stroke="#d8b828" stroke-width="1.2"/>
 <!-- grey: left section floor -->
 <polygon points="206.4,338.7 217.3,334.7 272.8,313.6 305.6,348.75 286.9,351.9 282.2,353.4 276.6,388.6 249.4,385.6" fill="#9c9c9c"/>
 <!-- dark wall of the box -->
 <polygon points="272.8,313.6 305.6,348.75 286.9,351.9 270.5,331.6" fill="#7a7a7a"/>
 <!-- green gap -->
 <polygon points="249.4,305.8 265.2,302.9 263,334.4 256.6,343 248,341.6" fill="#00a60c"/>
 <polygon points="233.5,305.5 239.5,304.5 239,317 233.5,318" fill="#008206"/>
 <!-- left walls -->
 <polygon points="215,311 219.500,308.5 223,313.500 219.5,342 214.500,338" fill="#8a8a8a"/>
 <polygon points="223,313.5 228,315.800 223.600,345 219.500,342" fill="#c9c9c9"/>
 <circle cx="220.800" cy="315" r="1.400" fill="#f4f4f4"/>
 <polygon points="228,318 239.500,318 243,332 231.800,334 231.800,358 227,352 224.500,340" fill="#a4a4a4"/>
 <polygon points="227,322 234,322 231.800,334 231.800,358 227.500,353" fill="#7e7e7e"/>
 <polygon points="228,304.300 233.700,304.300 233.200,318.700 228,320" fill="#c4c4c4"/>
 <polygon points="239.400,305.800 249.400,305 248,331.500 243,330 238.700,323" fill="#c6c6c6"/>
 <polygon points="265.200,300.700 273,301.500 271,333 263,334.400" fill="#cacaca"/>
 <!-- left cylinder -->
 <rect x="231.800" y="331.500" width="11.400" height="32" fill="#c8c8c8"/>
 <rect x="231.800" y="331.500" width="2.200" height="32" fill="#a0a0a0"/>
 <ellipse cx="237.500" cy="363.500" rx="5.700" ry="2.200" fill="#c8c8c8"/>
 <ellipse cx="237.500" cy="331.800" rx="5.700" ry="2.300" fill="#e6e6e6" stroke="#a0a0a0" stroke-width=".7"/>
 <!-- shadows + lower walls -->
 <polygon points="243.200,346 258.500,351 260,382 252.500,373.750 243.200,361" fill="#707070"/>
 <polygon points="259,351 280.200,357.300 276.600,388 258.700,384.500" fill="#bcbcbc"/>
 <polygon points="258.700,356 261.500,356 263,384.700 258.700,384.500" fill="#787878"/>
 <polygon points="266.500,355 268.500,355.500 267.500,385.500 265.500,385.200" fill="#787878"/>
 <rect x="284.500" y="350" width="6" height="4.500" fill="#f2f2f2"/>
 <rect x="306.400" y="347" width="10" height="3.400" fill="#f0f0f0"/>
 <line x1="249.400" y1="386" x2="276.600" y2="389" stroke="#e8d888" stroke-width="1.400"/>
 <line x1="206.400" y1="338.700" x2="249.400" y2="385.600" stroke="#d8c060" stroke-width="1"/>
 <!-- cyan wireframe -->
 <path d="M233,341.600 L245.800,344.400 L263,335.800 L270.200,334.400 L286,354.500 L284.500,360.200 L274.500,347.300 L268.800,348.700 L264.500,363 L257.300,357.300 L248.700,357.300 L241.500,347.300 Z M245.800,344.400 L252.500,353 L265,347 L266,337.500 M252.500,353 L257.300,357.300 M270.200,334.400 L273,340.500 L284.500,357 M241.500,347.300 L250,352 L262.500,349.500 M260,350.500 L262.500,359" fill="none" stroke="#38e0ea" stroke-width="1.150"/>
 <!-- small green block -->
 <polygon points="283.75,353.4 316.6,351.1 322,356.6 289.2,358.1" fill="#00a008"/>
 <polygon points="283.75,353.4 289.2,358.1 286.1,395.6 277.5,387.8" fill="#00900a"/>
 <polygon points="289.2,358.1 322,356.6 322,393.3 286.1,395.6" fill="#0cc814"/>
 <line x1="286.1" y1="395.6" x2="322" y2="393.3" stroke="#c8d048" stroke-width="1.2"/>
 <!-- pull direction -->
 <g fill="none" stroke="#e6ea6a" stroke-width="1">
  <path d="M335.8,421.7 L353.75,423.3"/>
  <path d="M335.8,421.7 L329.5,470.2 L328,470.2 L330.3,478 L335,470.2 L333.4,470.2 L338.1,422"/>
  <path d="M351.4,423.3 L343.6,471 L341.25,470.6 L343.1,479.5 L348.3,472 L347.3,471.6 L353.75,423.3"/>
 </g>
 <text transform="translate(351.400,496) scale(.66,1)" font-family="'Liberation Mono',monospace" font-size="15.500" letter-spacing="1.350" fill="#e8ec68" style="white-space:pre">PULL DIRECTION</text>
</svg>
</div>
 <!-- right feature toolbar -->
 <div id="rbar" class="a" style="left:786px;top:110px;width:41px;height:505px">
  <div class="a" style="left:4px;top:5px;width:35px;height:0;border-top:1px dotted #aca899"></div><div class="a" style="left:4px;top:6px;width:35px;height:0;border-top:1px dotted #fff"></div>
  <div class="a" style="left:4px;top:326px;width:35px;height:0;border-top:1px dotted #aca899"></div><div class="a" style="left:4px;top:327px;width:35px;height:0;border-top:1px dotted #fff"></div>
  <svg class="a" style="left:0;top:0" width="41" height="505" viewBox="786 110 41 505">
   <defs><linearGradient id="gT" x1="0" y1="0" x2="0" y2="1"><stop offset="0" stop-color="#d8fafa"/><stop offset=".55" stop-color="#7adce0"/><stop offset="1" stop-color="#28a8a8"/></linearGradient></defs>
   <g fill="#000"><path d="M817 162.500h5.600l-2.800 3zM817 218.500h5.600l-2.800 3zM817 301.500h5.600l-2.800 3zM817 566.500h5.600l-2.800 3z"/></g>
   <!-- 1 ref model -->
   <path d="M793.500 128.500v13M790 146l3.500-4M793.500 142.500h16.500" stroke="#8a5a30" stroke-width="1.200" fill="none"/>
   <path d="M794.500 141.500q-1.500-2 .5-4l3-3.500h6.500l3.500 3.500q1.500 2.500-1 4.500z" fill="url(#gT)" stroke="#1a6a6a" stroke-width=".8"/>
   <path d="M794.500 139.500h13" stroke="#148888" stroke-width="1.400"/>
   <path d="M806 126.500h-3.500q-1.500 0-1.500 1.500v3" stroke="#000" stroke-width="1.300" fill="none"/><path d="M798.500 129.500h5l-2.500 3z" fill="#000"/>
   <!-- 2 -->
   <path d="M794.500 169.500q-1.500-2 .5-4l3-3.500h6l3.500 3.500q1.500 2.500-1 4.500z" fill="url(#gT)" stroke="#1a6a6a" stroke-width=".8"/>
   <path d="M794.500 167.500h12.500" stroke="#148888" stroke-width="1.200"/>
   <path d="M792.500 155.500l4 4M808.500 155.500l-4 4M792.500 174.500l4-4M808.500 174.500l-4-4" stroke="#000" stroke-width="1.100"/>
   <path d="M791.500 154.500h4l-4 4zM809.500 154.500h-4l4 4zM791.500 175.500h4l-4-4zM809.500 175.500h-4l4-4z" fill="#000"/>
   <!-- 3 block -->
   <path d="M791.500 190l5-4h13.500l-4.500 4z" fill="#b8f4f0" stroke="#1a6a5a" stroke-width=".8"/><path d="M805.500 190l4.500-4v7.500l-4.500 4z" fill="#1a8a78" stroke="#1a6a5a" stroke-width=".8"/><rect x="791.500" y="190" width="14" height="7.500" fill="#6edcc8" stroke="#1a6a5a" stroke-width=".8"/>
   <!-- 4 L shape -->
   <path d="M792 217.500l3-3h7v-3.500l3.500-3h3.500v16l-3.500 3h-3.500v-5.500h-7z" fill="#b8f0e8" stroke="#1a5a50" stroke-width=".9"/><path d="M802 214.500v6.500M805.500 208v16" stroke="#1a5a50" stroke-width=".8"/>
   <path d="M792 217.500h10v3.500h-10z" fill="#58c8b8" stroke="#1a5a50" stroke-width=".8"/>
   <!-- 5 dome w/ orange -->
   <path d="M792 248l5-6.500h8l5 5v3l-3.500 3.500h-11z" fill="url(#gT)" stroke="#1a6a6a" stroke-width=".8"/><path d="M791.500 248.500h13.500l5-2" stroke="#d84a10" stroke-width="2" fill="none"/><path d="M805 242l5 4.500v3l-3.500 3.500z" fill="#1a8a88"/>
   <!-- 6 pink surface -->
   <path d="M792 271q8-1 16-5v13q-8 4-16 6z" fill="#f4c8f4" stroke="#8a4a9a" stroke-width="1"/><path d="M796 270v13M800 269v13M804 267.500v13" stroke="#e8a8e8" stroke-width=".8"/>
   <!-- 7 stacked boxes -->
   <path d="M792 299.500l3.500-3.500h13.500v5l-3.500 3.500h-13.500z" fill="#a8e8b8" stroke="#1a3a2a" stroke-width="1"/><path d="M792 305l3.500-3.500h13.500v4.500l-3.500 3.500h-13.500z" fill="#f4c0f0" stroke="#1a3a2a" stroke-width="1"/><path d="M792 309.500h13.500l3.500-3.500v4l-3.500 3.500h-13.500z" fill="#fdfdfd" stroke="#1a3a2a" stroke-width="1"/><path d="M792 299.500h13.500l3.500-3.500M805.500 299.500v13.500" fill="none" stroke="#1a3a2a" stroke-width="1"/>
   <!-- 8 boxes w/ arrow -->
   <path d="M791 330.500l3-2.500h11l-3 2.500v5h-11z" fill="#9ae4cc" stroke="#1a6a5a" stroke-width=".8"/><rect x="796" y="325" width="10" height="5" fill="#fdfdfd" stroke="#5a7a7a" stroke-width=".7"/><path d="M795 336l4-3h11v4.500l-4 3h-11z" fill="#b8f0f0" stroke="#1a6a6a" stroke-width=".8"/><path d="M801 320q2.500-1.500 3 1v9" fill="none" stroke="#000" stroke-width="1.300"/><path d="M801 329h6l-3 4z" fill="#000"/>
   <!-- 9 mold open -->
   <g transform="translate(0,2)">
   <path d="M792 351.500l4-3.500h14l-4 3.500z" fill="#d8fcd8" stroke="#1a6a3a" stroke-width=".7"/><path d="M792 351.500h14v3.500h-14zM806 351.500l4-3.500v3.500l-4 3.500z" fill="#38c858" stroke="#1a6a3a" stroke-width=".7"/><path d="M796 355.500h7l2 3-2 3h-7l-2-3z" fill="#7ae0e8" stroke="#1a7a8a" stroke-width=".7"/><path d="M792 362.500l4-3.500h14l-4 3.500z" fill="#d8fcd8" stroke="#1a6a3a" stroke-width=".7"/><path d="M792 362.500h14v4h-14zM806 362.500l4-3.500v4l-4 3.500z" fill="#38c858" stroke="#1a6a3a" stroke-width=".7"/>
   </g>
   <!-- 10 disabled -->
   <path d="M797.500 380q0-2 2-2t2 2v6h-4zM792 388.500h9l8-4M797.500 388v8M801.500 387v9M792 388.500l6-3" fill="none" stroke="#c0beb0" stroke-width="1.100"/>
   <!-- 11 mold + play -->
   <g transform="translate(-.5,2)">
   <path d="M795 408h13v3.500h-13zM795 413h13v3h-13zM795 417.500h13v4h-13zM795 423h13v4h-13z" fill="#38c850" stroke="#1a5a2a" stroke-width=".7"/><path d="M808 408l2-2v19l-2 2z" fill="#1a6a3a"/><path d="M795 408l2-2h13l-2 2z" fill="#b8f0c0" stroke="#1a5a2a" stroke-width=".5"/><rect x="795" y="411.500" width="13" height="1.800" fill="#fdfdfd"/><path d="M800 419l5-1.500v3l-5 1.500z" fill="#8a2a10"/>
   <circle cx="795.500" cy="408.500" r="5" fill="#fdfdfd" stroke="#111" stroke-width="1.100"/><path d="M794 405.500l4 3-4 3z" fill="#111"/>
   </g>
   <!-- 12 wave -->
   <g fill="#3a5a9a"><circle cx="792" cy="448" r=".7"/><circle cx="796" cy="448" r=".7"/><circle cx="800" cy="448" r=".7"/><circle cx="804" cy="448" r=".7"/><circle cx="808" cy="448" r=".7"/><circle cx="792" cy="452" r=".7"/><circle cx="808" cy="452" r=".7"/><circle cx="792" cy="456" r=".7"/><circle cx="808" cy="456" r=".7"/><circle cx="792" cy="460" r=".7"/><circle cx="808" cy="460" r=".7"/><circle cx="792" cy="464" r=".7"/><circle cx="796" cy="464" r=".7"/><circle cx="800" cy="464" r=".7"/><circle cx="804" cy="464" r=".7"/><circle cx="808" cy="464" r=".7"/></g>
   <path d="M792 459q4-10 8-3t8 2" fill="none" stroke="#1a4aa8" stroke-width="1.600"/>
   <!-- 13 plane -->
   <path d="M791 490l5-10.500h12.500l-5 10.500z" fill="none" stroke="#8a5a30" stroke-width="1.500"/>
   <!-- 14 axis -->
   <path d="M795 522l9-19" stroke="#8a5a30" stroke-width="1.600" stroke-dasharray="4 2"/>
   <!-- 15 curve -->
   <path d="M791 546q3-11 8-7t10-5" fill="none" stroke="#8a5a30" stroke-width="1.400"/>
   <!-- 16 points -->
   <path d="M797 561l4.500 4.500M801.500 561l-4.500 4.500M802 569.500l4.500 4.500M806.500 569.500l-4.500 4.500M792 571.500l4.500 4.500M796.500 571.500l-4.500 4.500" stroke="#8a5a30" stroke-width="1.300"/>
   <!-- 17 csys -->
   <path d="M790 597h12M793 589l8 14M801 589.500l-6 14" stroke="#8a5a30" stroke-width="1.400"/><path d="M790 586.500l1.500 2.500 1.500-2.500M791.500 589v2M804.500 594.500l3.500 3.500M808 594.500l-3.500 3.500M789.500 601.500h3l-3 3.500h3" stroke="#5a6a7a" fill="none"/>
  </svg>
 </div>
 <!-- message area -->
 <div id="msgs" class="a" style="left:4px;top:615px;width:823px;height:95px;background:#ebeae5">
  <div class="a" style="left:6px;top:18px;width:6px;height:6px;border-radius:3px;background:#1414a8"></div>
  <div class="a" style="left:6px;top:34px;width:6px;height:6px;border-radius:3px;background:#1414a8"></div>
  <div class="a" style="left:6px;top:50px;width:6px;height:6px;border-radius:3px;background:#1414a8"></div>
  <svg class="a" style="left:3px;top:62px" width="12" height="13" viewBox="0 0 12 13"><path d="M1.500 4.500h4.500v-3l5 5-5 5v-3h-4.500z" fill="#38d048" stroke="#0a4a1a" stroke-width="1"/></svg>
  <div class="a msg" style="left:16px;top:14px">选取要改变颜色的曲面。</div>
  <div class="a msg" style="left:16px;top:30px">选取要改变颜色的面组。</div>
  <div class="a msg" style="left:16px;top:46px">显示由特征<i class="l">9 (</i>体积块<i class="l">MOLD_VOL_1)</i>，模型<i class="l">MFG0001</i>创建的面组。</div>
  <div class="a msg" style="left:16px;top:62px">指示面组侧</div>
  <!-- scrollbar -->
  <div class="a" style="left:806px;top:3px;width:17px;height:92px;background:#f5f4ee"></div>
  <div class="sb" style="left:806px;top:3px;height:17px"><svg width="15" height="15" viewBox="0 0 15 15"><path d="M3.500 9.500l4-4 4 4" fill="none" stroke="#4d6185" stroke-width="2"/></svg></div>
  <div class="sb" style="left:806px;top:63px;height:13px"><svg width="15" height="11" viewBox="0 0 15 11" style="display:block"><path d="M4 2.500h7M4 4.500h7M4 6.500h7M4 8.500h7" stroke="#8ea4d8" stroke-width="1"/></svg></div>
  <div class="sb" style="left:806px;top:77px;height:17px"><svg width="15" height="15" viewBox="0 0 15 15"><path d="M3.500 5.500l4 4 4-4" fill="none" stroke="#4d6185" stroke-width="2"/></svg></div>
 </div>
 <!-- status bar -->
 <div id="status" class="a" style="left:4px;top:709px;width:823px;height:25px;border-top:1px solid #a09d90;background:#ece9d8">
  <div class="a" style="left:0;top:1px;width:823px;height:1px;background:#fff"></div>
  <div class="a" style="left:0;top:6px;white-space:nowrap"><i class="l">F14(</i>参照零件切除<i class="l">)</i></div>
  <div class="a" style="left:508px;top:2px;width:95px;height:22px;background:#d6d2ca;border-left:1px solid #fff"></div>
  <div class="a" style="left:603px;top:3px;width:181px;height:20px;background:#fff;border:1px solid #7f9db9"></div>
  <div class="a" style="left:609px;top:6px;white-space:nowrap">智能</div>
  <div class="sb" style="left:765px;top:5px;width:17px;height:16px"><svg width="15" height="14" viewBox="0 0 15 14" style="display:block"><path d="M3.500 4.500l4 4 4-4" fill="none" stroke="#4d6185" stroke-width="2"/></svg></div>
 </div>
</div>

<!-- ============ TASKBAR ============ -->
<div id="taskbar" class="a" style="left:0;top:738px;width:1024px;height:30px;background:linear-gradient(#1f2f86 0,#3165c4 3%,#3682e5 6%,#4490e6 10%,#3883e5 12%,#2b71e0 15%,#2663da 18%,#235bd6 20%,#2258d5 23%,#2157d6 38%,#245ddb 54%,#2562df 86%,#245fdc 89%,#2158d4 92%,#1d4ec0 95%,#1941a5 98%)">
 <!-- start -->
 <div class="a" style="left:0;top:0;width:97px;height:30px;border-radius:0 12px 12px 0/0 15px 15px 0;background:linear-gradient(#3c8a3c 0,#5cb85c 6%,#4aaa4a 12%,#3a9a3a 25%,#359435 60%,#3a9a3a 85%,#2f862f 95%,#236a23 100%);box-shadow:inset -3px 0 5px rgba(20,70,20,.55),2px 0 3px rgba(10,30,90,.5)"></div>
 <svg class="a" style="left:10px;top:5px" width="22" height="20" viewBox="0 0 22 20"><path d="M2.500 3q3.500-2 7 0l-1.500 6q-3.500-1.800-7 0z" fill="#e8542a"/><path d="M11 3.500q3.500 2 7.500-.5l-1.500 6q-4 2-7.500.5z" fill="#7ac43a"/><path d="M1 10.500q3.500-1.800 7 0l-1.500 6q-3.500-2-7 0z" fill="#3a8ae8" transform="translate(.5,0)"/><path d="M9 11.500q3.500 1.500 7.500-.5l-1.500 6q-4 2-7.500.5z" fill="#f4c430"/></svg>
 <div class="a" style="left:38px;top:4px;color:#fff;font-size:18px;line-height:22px;font-style:italic;letter-spacing:0;text-shadow:1px 1px 1px #1a4a1a;white-space:nowrap;transform:skewX(-8deg)">开始</div>
 <!-- quick launch -->
 <svg class="a" style="left:109px;top:6px" width="18" height="18" viewBox="0 0 18 18"><circle cx="8.500" cy="9.500" r="6" fill="none" stroke="#58b8f4" stroke-width="2.600"/><path d="M3 9.500h11" stroke="#58b8f4" stroke-width="2.200"/><path d="M1 13q-1.500 4 3 2.500q7-3 11.500-10q1.500-4-3-2.500" fill="none" stroke="#e8d060" stroke-width="1.300"/><path d="M11.500 12.500h3.500" stroke="#2a62d8" stroke-width="3"/></svg>
 <svg class="a" style="left:133px;top:6px" width="16" height="18" viewBox="0 0 16 18"><path d="M2 2h11l-1.500 9h-8z" fill="#d8ecfc" stroke="#4a7ac8" stroke-width="1"/><path d="M3 3h9l-.5 3h-8z" fill="#6ab0f4"/><path d="M4 12h7l1 4h-9z" fill="#f0f0f0" stroke="#c04848" stroke-width=".8"/></svg>
 <svg class="a" style="left:155px;top:6px" width="18" height="18" viewBox="0 0 18 18"><path d="M2 3h10l3 3v10h-13z" fill="#fdfdfd" stroke="#5a7ab8" stroke-width="1"/><circle cx="8" cy="10" r="4" fill="none" stroke="#2a5ac8" stroke-width="1.800"/><path d="M5 10h6.500" stroke="#2a5ac8" stroke-width="1.500"/><path d="M12 2l4 1-2 3" fill="none" stroke="#e88a20" stroke-width="1.500"/></svg>
 <!-- buttons -->
 <div class="tk" style="left:182px;top:3px;width:108px"><svg class="a" style="left:9px;top:4px" width="17" height="17" viewBox="0 0 18 18"><path d="M2 2h10l4 4v10h-14z" fill="#fdfdfd" stroke="#8a9ab8" stroke-width="1"/><circle cx="8" cy="9.500" r="4.500" fill="none" stroke="#2a6ad8" stroke-width="2"/><path d="M4 9.500h8" stroke="#2a6ad8" stroke-width="1.800"/><path d="M2 14q4 0 11-9" fill="none" stroke="#e8b830" stroke-width="1.200"/></svg><b>我的51网<i class="l">...</i></b></div>
 <div class="tk" style="left:293px;top:3px;width:108px"><svg class="a" style="left:9px;top:5px" width="18" height="15" viewBox="0 0 18 15"><path d="M1 13.500v-11h5l1.500 2h9v9z" fill="#f0cc50" stroke="#9a7a18"/><path d="M1 13.500l2.500-6.500h14l-2 6.500z" fill="#fae890" stroke="#9a7a18"/></svg><b>模具设计<i class="l">...</i></b></div>
 <div class="tk" style="left:404px;top:3px;width:108px"><svg class="a" style="left:9px;top:4px" width="17" height="17" viewBox="0 0 18 18"><path d="M2 2h10l4 4v10h-14z" fill="#fdfdfd" stroke="#8a9ab8" stroke-width="1"/><circle cx="8" cy="9.500" r="4.500" fill="none" stroke="#2a6ad8" stroke-width="2"/><path d="M4 9.500h8" stroke="#2a6ad8" stroke-width="1.800"/><path d="M2 14q4 0 11-9" fill="none" stroke="#e8b830" stroke-width="1.200"/></svg><b>大家帮我<i class="l">...</i></b></div>
 <div class="tk" style="left:515px;top:3px;width:108px"><svg class="a" style="left:9px;top:5px" width="16" height="15" viewBox="0 0 16 15"><path d="M1.500 3.500l2-2h11v10l-2 2h-11z" fill="#7ae0d8" stroke="#1a4a4a" stroke-width="1"/><rect x="1.500" y="3.500" width="11" height="10" fill="#a8f0e8" stroke="#1a4a4a" stroke-width="1"/></svg><b class="mono" style="font-size:11px;letter-spacing:-.3px">3-32 - P...</b></div>
 <div class="tk on" style="left:626px;top:3px;width:109px"><svg class="a" style="left:10px;top:5px" width="15" height="15" viewBox="0 0 16 16"><path d="M1 7h4v5h7V8h3v7H1z" fill="#1e9a4a" stroke="#0b5a26" stroke-width="1"/><path d="M9 1v8" stroke="#fff" stroke-width="2.400"/><path d="M2 8h2v5h9V9h1" fill="none" stroke="#d8ffe0" stroke-width="1"/></svg><b class="mono" style="left:29px;font-size:11px;letter-spacing:-.4px">MFG0001 ...</b></div>
 <div class="tk" style="left:738px;top:3px;width:109px"><svg class="a" style="left:10px;top:5px" width="15" height="15" viewBox="0 0 16 16"><path d="M1 7h4v5h7V8h3v7H1z" fill="#1e9a4a" stroke="#0b5a26" stroke-width="1"/><path d="M9 1v8" stroke="#fff" stroke-width="2.400"/><path d="M2 8h2v5h9V9h1" fill="none" stroke="#d8ffe0" stroke-width="1"/></svg><b style="left:29px">模型树</b></div>
 <!-- keyboard -->
 <svg class="a" style="left:858px;top:8px" width="16" height="14" viewBox="0 0 16 14"><rect x=".5" y="3.500" width="15" height="9" rx="1" fill="#f4f4f4" stroke="#333" stroke-width=".8"/><path d="M2 6h12M2 8h12M3 10.500h10" stroke="#333" stroke-width="1" stroke-dasharray="1 1"/><path d="M4 .5q2 1.500 4 0t4 1" fill="none" stroke="#ddd" stroke-width=".8"/></svg>
 <!-- tray -->
 <div class="a" style="left:893px;top:0;width:131px;height:30px;background:linear-gradient(#0c59b9 0,#139ee9 6%,#18b5f2 10%,#139be8 14%,#1290e8 19%,#0d8dea 63%,#0d9ff1 81%,#0f9eed 88%,#119be9 91%,#1392e2 94%,#137ed7 97%,#095bc9 100%);border-left:1px solid #0a3c9a;box-shadow:inset 1px 0 0 #3ac0f8"></div>
 <svg class="a" style="left:897px;top:7px" width="100" height="18" viewBox="0 0 100 18">
  <circle cx="8" cy="9" r="6.500" fill="#3a9ae8" stroke="#c8e4fc" stroke-width="1"/><path d="M9.500 5.500l-3.500 3.500 3.500 3.500" fill="none" stroke="#fff" stroke-width="1.600"/>
  <ellipse cx="24" cy="10" rx="6" ry="7" fill="#222"/><ellipse cx="24" cy="12" rx="4" ry="4.500" fill="#fdfdfd"/><path d="M18 13q6 3.500 12 0l-.5 3.500h-11z" fill="#d82a1a"/><path d="M21.500 8h5l-2.500 2z" fill="#f4b020"/>
  <rect x="37" y="3" width="9" height="8" fill="#c8d8e8" stroke="#556" stroke-width=".8"/><rect x="33" y="7" width="9" height="8" fill="#a8c8e8" stroke="#556" stroke-width=".8"/>
  <rect x="50.500" y="1.500" width="14" height="15" rx="2" fill="#2aa85a" stroke="#e8fff0" stroke-width="1.300"/><path d="M55 5l-2.500 4 2.500 4M60 5l2.500 4-2.500 4" fill="none" stroke="#e8fff0" stroke-width="1.300"/>
  <circle cx="73" cy="11" r="5" fill="#2a5ad8"/><circle cx="74" cy="6.500" r="3.500" fill="#f4d838"/>
 </svg>
 <div class="a" style="left:981px;top:8px;color:#fff;font-size:11.500px;line-height:14px;letter-spacing:.2px">18:00</div>
</div>

<!-- ============ WATERMARK ============ -->
<div id="wm" class="a" style="left:867px;top:710px;width:152px;height:50px;background:rgba(255,255,255,.33);border-top:3px solid rgba(238,130,140,.8);overflow:hidden">
 <div class="a" style="left:9px;top:5px;width:134px;white-space:nowrap;font-family:'Liberation Sans','Noto Sans CJK TC','Noto Sans CJK SC',sans-serif;font-weight:900;font-size:22px;line-height:24px;color:rgba(226,52,52,.72);letter-spacing:0">中華設計論壇</div>
 <div class="a" style="left:10px;top:28px;white-space:nowrap;font-family:'Liberation Sans',sans-serif;font-weight:bold;font-size:17px;line-height:20px;color:rgba(22,100,190,.62);letter-spacing:.3px">bbs.chinade.net</div>
</div>

</body></html>
